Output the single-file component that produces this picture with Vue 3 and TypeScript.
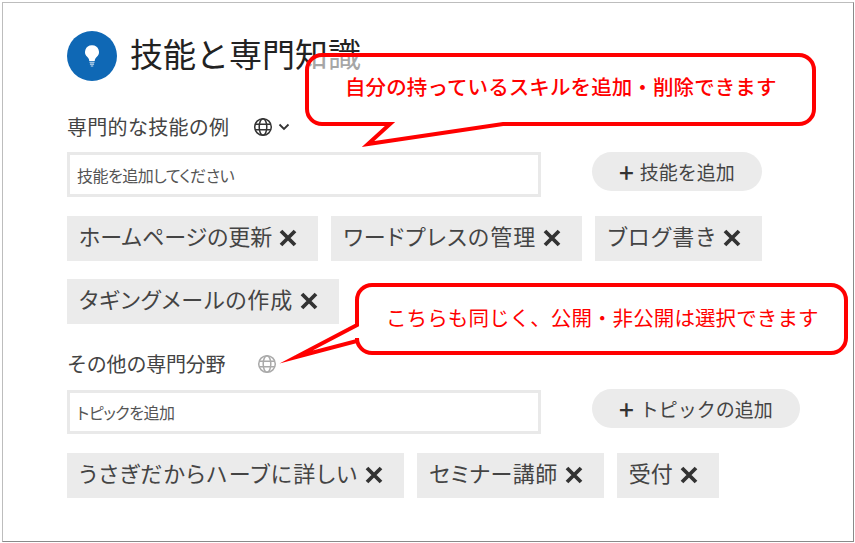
<script setup lang="ts">
interface Chip {
  text: string
  track: number
}
interface Section {
  label: string
  labelTrack: number
  placeholder: string
  action: string
  chips: Chip[]
}
const skills: Section = {
  label: '専門的な技能の例',
  labelTrack: 0.3,
  placeholder: '技能を追加してください',
  action: '技能を追加',
  chips: [
    { text: 'ホームページの更新', track: 0 },
    { text: 'ワードプレスの管理', track: 1.1 },
    { text: 'ブログ書き', track: 1.4 },
    { text: 'タギングメールの作成', track: 0.8 },
  ],
}
const topics: Section = {
  label: 'その他の専門分野',
  labelTrack: -0.2,
  placeholder: 'トピックを追加',
  action: 'トピックの追加',
  chips: [
    { text: 'うさぎだからハーブに詳しい', track: 1.2 },
    { text: 'セミナー講師', track: 0.45 },
    { text: '受付', track: 0 },
  ],
}
</script>

<template>
  <div class="frame">
    <header class="head">
      <span class="badge">
        <svg width="20" height="24" viewBox="0 0 24 28">
          <path d="M12 1a8.200 8.200 0 0 0-5 14.800c1 .9 1.600 2.200 1.700 4.200h6.600c.1-2 .7-3.300 1.700-4.200A8.200 8.200 0 0 0 12 1z" fill="#fff" />
          <path d="M9 21.500h6M9.500 23.800h5M10.500 26h3" stroke="#cfe0f0" stroke-width="1.400" />
        </svg>
      </span>
      <h1>技能と専門知識</h1>
    </header>

    <section class="first">
      <div class="label">
        <span class="label-text" :style="{ letterSpacing: skills.labelTrack + 'px' }">{{ skills.label }}</span>
        <svg class="globe" width="20" height="20" viewBox="0 0 20 20" fill="none" stroke="#333" stroke-width="1.500">
          <circle cx="10" cy="10" r="8.300" /><ellipse cx="10" cy="10" rx="3.800" ry="8.300" /><path d="M2 7.200h16M2 12.800h16" />
        </svg>
        <svg class="chev" width="12" height="8" viewBox="0 0 12 8" fill="none" stroke="#333" stroke-width="1.800"><path d="M1.500 1.500 6 6l4.500-4.500" /></svg>
      </div>
      <div class="entry">
        <input class="field" :placeholder="skills.placeholder" />
        <button class="add"><span class="plus">+</span>{{ skills.action }}</button>
      </div>
      <ul class="chips">
        <li v-for="c in skills.chips" :key="c.text" class="chip">
          <span :style="{ letterSpacing: c.track + 'px' }">{{ c.text }}</span>
          <svg width="18" height="18" viewBox="0 0 18 18" stroke="#333" stroke-width="3.800"><path d="M2 2l14 14M16 2 2 16" /></svg>
        </li>
      </ul>
    </section>

    <section class="second">
      <div class="label">
        <span class="label-text" :style="{ letterSpacing: topics.labelTrack + 'px' }">{{ topics.label }}</span>
        <svg class="globe pale" width="20" height="20" viewBox="0 0 20 20" fill="none" stroke="#aaa" stroke-width="1.500">
          <circle cx="10" cy="10" r="8.300" /><ellipse cx="10" cy="10" rx="3.800" ry="8.300" /><path d="M2 7.200h16M2 12.800h16" />
        </svg>
      </div>
      <div class="entry">
        <input class="field" :placeholder="topics.placeholder" />
        <button class="add"><span class="plus">+</span>{{ topics.action }}</button>
      </div>
      <ul class="chips">
        <li v-for="c in topics.chips" :key="c.text" class="chip">
          <span :style="{ letterSpacing: c.track + 'px' }">{{ c.text }}</span>
          <svg width="18" height="18" viewBox="0 0 18 18" stroke="#333" stroke-width="3.800"><path d="M2 2l14 14M16 2 2 16" /></svg>
        </li>
      </ul>
    </section>

    <svg class="callouts" width="855" height="543" viewBox="0 0 855 543">
      <path d="M322 55H799a15 15 0 0 1 15 15V109a15 15 0 0 1-15 15H503L368 144 390 124H322a15 15 0 0 1-15-15V70a15 15 0 0 1 15-15z" fill="#fff" fill-opacity="0.6" stroke="#f00" stroke-width="4" stroke-miterlimit="20" />
      <path d="M372 285H831a15 15 0 0 1 15 15V338a15 15 0 0 1-15 15H372a15 15 0 0 1-15-15V341L296 357 357 325V300a15 15 0 0 1 15-15z" fill="#fff" stroke="#f00" stroke-width="4" stroke-miterlimit="20" />
    </svg>
    <p class="note n1">自分の持っているスキルを追加・削除できます</p>
    <p class="note n2">こちらも同じく、公開・非公開は選択できます</p>
  </div>
</template>

<style scoped>
.frame {
  position: relative;
  box-sizing: border-box;
  width: 852px;
  height: 540px;
  margin: 2px 0 0 2px;
  padding: 28px 0 0 64px;
  border: 1px solid #8a8a8a;
  border-top-color: #bdbdbd;
  border-left-color: #bdbdbd;
  background: #fff;
  color: #333;
  font-family: "Noto Sans CJK JP", "Noto Sans", sans-serif;
  overflow: hidden;
}
.head {
  display: flex;
  align-items: center;
  gap: 13px;
}
.badge {
  width: 50px;
  height: 50px;
  border-radius: 50%;
  background: #0f68b5;
  display: flex;
  align-items: center;
  justify-content: center;
}
h1 {
  margin: 0;
  padding-bottom: 6px;
  font-size: 33px;
  font-weight: 400;
  line-height: 44px;
  color: #222;
}
.first { margin-top: 31px; }
.second { margin-top: 25px; }
.label {
  display: flex;
  align-items: center;
  height: 30px;
  font-size: 20px;
  color: #444;
}
.label-text {
  position: relative;
  top: -1px;
}
.globe { margin-left: 24px; }
.globe.pale { margin-left: 32px; }
.chev { margin-left: 5px; }
.entry {
  display: flex;
  align-items: flex-start;
  margin-top: 10px;
  gap: 51px;
}
.field {
  box-sizing: border-box;
  width: 474px;
  height: 45px;
  padding: 0 7px;
  border: 3px solid #e9e9e9;
  outline: none;
  font: inherit;
  font-size: 16px;
  letter-spacing: -0.5px;
  font-feature-settings: "palt";
}
.second .field {
  height: 44px;
  margin-top: 1px;
}
.field::placeholder { color: #555; opacity: 1; }
.add {
  height: 39px;
  padding: 0 27px;
  border: 0;
  border-radius: 20px;
  background: #ebebeb;
  color: #444;
  font: inherit;
  font-size: 19px;
  display: flex;
  align-items: center;
  gap: 6px;
}
.plus { font-size: 26px; line-height: 1; color: #333; font-weight: 500; }
.chips {
  list-style: none;
  display: flex;
  flex-wrap: wrap;
  gap: 18px 13px;
  margin: 19px 0 0;
  padding: 0;
  width: 740px;
}
.chip {
  box-sizing: border-box;
  height: 45px;
  display: flex;
  align-items: center;
  gap: 7px;
  padding: 0 21px 8px 12px;
  background: #ebebeb;
  font-size: 22px;
  color: #444;
  font-feature-settings: "palt";
}
.chip svg { margin-top: 7px; }
.callouts {
  position: absolute;
  left: -3px;
  top: -3px;
  pointer-events: none;
}
.note {
  position: absolute;
  margin: 0;
  color: #f00;
  font-family: "Noto Sans CJK JP", "Liberation Serif", serif;
  font-size: 20.500px;
  letter-spacing: 0.1px;
  white-space: nowrap;
}
.n1 { left: 342px; top: 68px; font-weight: 500; }
.n2 { left: 383px; top: 299px; font-weight: 400; }
</style>
